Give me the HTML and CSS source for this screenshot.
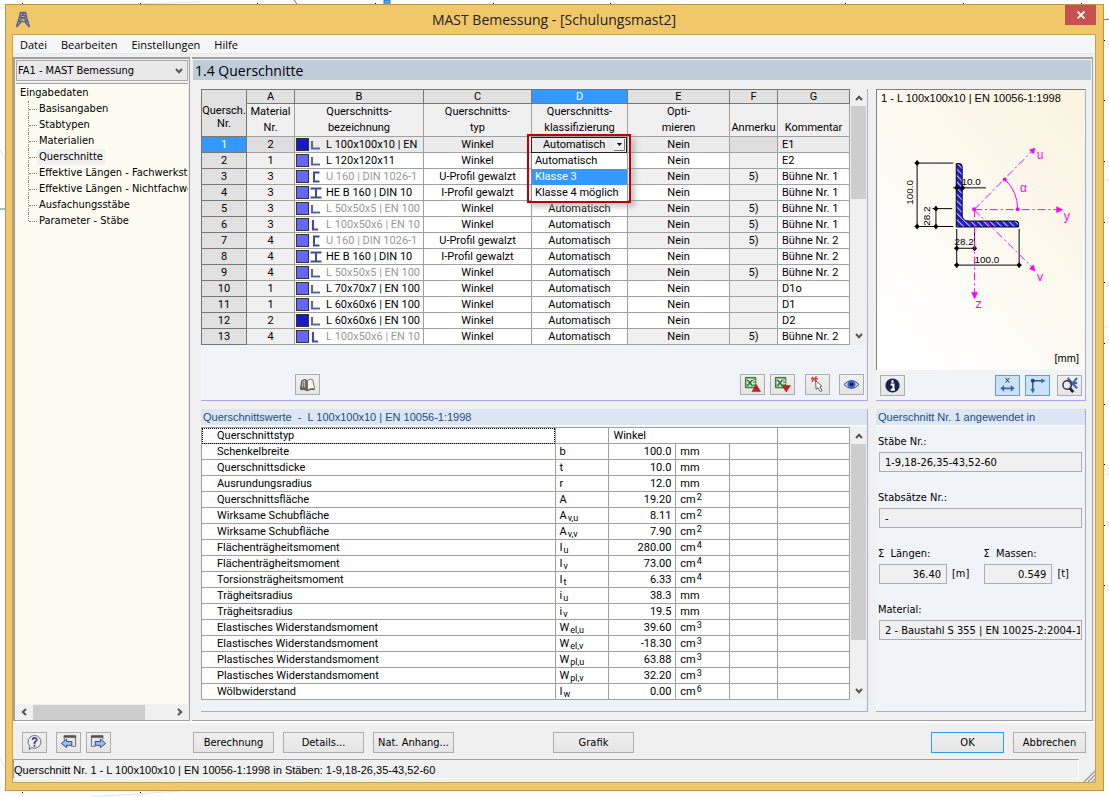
FILE: index.html
```
<!DOCTYPE html>
<html lang="de">
<head>
<meta charset="utf-8">
<title>MAST Bemessung - [Schulungsmast2]</title>
<link rel="stylesheet" href="styles.css">
</head>
<body>
<svg width="0" height="0" class="defs" aria-hidden="true">
  <symbol id="sl" viewBox="0 0 12 12"><path d="M2 2V9.500H10" fill="none" stroke="#5a6a9c" stroke-width="2.200"/></symbol>
  <symbol id="sn" viewBox="0 0 12 12"><path d="M3 1V10.500H8" fill="none" stroke="#3f5086" stroke-width="2.200"/></symbol>
  <symbol id="su" viewBox="0 0 12 12"><path d="M9.500 1.500H4V10.500H9.500" fill="none" stroke="#3f5086" stroke-width="2"/></symbol>
  <symbol id="si" viewBox="0 0 12 12"><path d="M0.500 1.500H11.500M0.500 10.500H11.500M6 1V11" fill="none" stroke="#3f5086" stroke-width="2"/></symbol>
  <symbol id="up" viewBox="0 0 8 6"><path d="M1 5L4 1.800L7 5" fill="none" stroke="#555" stroke-width="2"/></symbol>
  <symbol id="down" viewBox="0 0 8 6"><path d="M1 1L4 4.200L7 1" fill="none" stroke="#555" stroke-width="2"/></symbol>
  <symbol id="xls" viewBox="0 0 18 18"><path d="M1.500 1.500H12.500V12.500H1.500Z" fill="#7fae78" stroke="#2f6a35"/><path d="M3 3H9.500V11H3Z" fill="#f0f7ee"/><path d="M3.500 4L9 10.500M9 4L3.500 10.500" stroke="#2d7a38" stroke-width="1.800"/><path d="M10 5H12M10 8H12" stroke="#fff"/></symbol>
</svg>
<svg class="backdrop" aria-hidden="true">
  <g stroke="#e4e4e4" fill="none"><path d="M0 8L200 2M0 150L6 160M0 758L5 768M90 797L180 791M1102 180H1109M1102 328L1109 326M1102 476L1109 474"/></g>
  <path d="M294 0L297 4M0 209H6M1103 20L1109 19" stroke="#3f8080"/>
  <path d="M384 0H390V5H384Z" fill="#4fa0f0" stroke="#2f78cc"/>
  <path d="M22 3.500H23M140 3.500H141M257 3.500H258M375 3.500H376M493 3.500H494M610 3.500H611M845 3.500H846M963 3.500H964M1081 3.500H1082M22 792.500H23M140 792.500H141M1104 40.500H1105M1104 100.500H1105M1104 161.500H1105M1104 222.500H1105M1104 282.500H1105M1104 343.500H1105M1104 404.500H1105M1104 464.500H1105M1104 525.500H1105M1104 585.500H1105" stroke="#000"/>
</svg>
<div class="window">
  <header class="titlebar">
    <svg class="logo" viewBox="0 0 16 17"><path d="M5.500 1.500H10.500M5.500 1L4.500 6L1.500 16M10.500 1L11.500 6L14.500 16M4.500 6.500H11.500M5.500 1.500L11.500 6M10.500 1.500L4.500 6M3.500 10.500L8 7L12.500 10.500ZM1.500 16L6 11M14.500 16L10 11" fill="none" stroke="#56609a" stroke-width="1.400"/></svg>
    <h1>MAST Bemessung - [Schulungsmast2]</h1>
    <button class="close" aria-label="Schließen"><svg viewBox="0 0 8 8"><path d="M.5 .5L7.500 7.500M7.500 .5L.5 7.500" stroke="#fff" stroke-width="1.800"/></svg></button>
  </header>
  <div class="client">
    <nav class="menu"><button>Datei</button><button>Bearbeiten</button><button>Einstellungen</button><button>Hilfe</button></nav>
    <div class="main">
      <aside class="side">
        <select class="case" aria-label="Bemessungsfall"><option>FA1 - MAST Bemessung</option></select>
        <div class="tree">
          <a class="root" href="#">Eingabedaten</a>
          <ul>
            <li><a href="#">Basisangaben</a></li>
            <li><a href="#">Stabtypen</a></li>
            <li><a href="#">Materialien</a></li>
            <li><a href="#" class="current">Querschnitte</a></li>
            <li><a href="#">Effektive Längen - Fachwerkstä</a></li>
            <li><a href="#">Effektive Längen - Nichtfachwe</a></li>
            <li><a href="#">Ausfachungsstäbe</a></li>
            <li><a href="#">Parameter - Stäbe</a></li>
          </ul>
        </div>
        <div class="hscroll">
          <svg viewBox="0 0 6 8"><path d="M5 1L1.800 4L5 7" fill="none" stroke="#555" stroke-width="2"/></svg>
          <div class="htrack"><div class="hthumb"></div></div>
          <svg viewBox="0 0 6 8"><path d="M1 1L4.200 4L1 7" fill="none" stroke="#555" stroke-width="2"/></svg>
        </div>
      </aside>
      <main class="work">
        <h2>1.4 Querschnitte</h2>
        <div class="panels">
          <section class="panel upper">
            <div class="gridwrap">
              <table class="grid sections">
                <colgroup><col class="w45"><col class="w48"><col class="w129"><col class="w108"><col class="w96"><col class="w102"><col class="w48"><col class="w72"></colgroup>
                <thead>
                  <tr class="letters"><th rowspan="2" class="corner">Quersch.<br>Nr.</th><th>A</th><th>B</th><th>C</th><th class="active">D</th><th>E</th><th>F</th><th>G</th></tr>
                  <tr class="names"><th>Material<br>Nr.</th><th>Querschnitts-<br>bezeichnung</th><th>Querschnitts-<br>typ</th><th>Querschnitts-<br>klassifizierung</th><th>Opti-<br>mieren</th><th>Anmerku</th><th>Kommentar</th></tr>
                </thead>
                <tbody>
                  <tr class="selected"><th>1</th><td>2</td><td><span class="profile"><i class="swatch dark"></i><svg><use href="#sl"/></svg>L 100x100x10 | EN</span></td><td>Winkel</td>
                    <td class="host"><div class="popup">
                      <select aria-label="Querschnittsklassifizierung"><option>Automatisch</option></select>
                      <ul role="listbox" aria-label="Klassen"><li role="option">Automatisch</li><li role="option" aria-selected="true">Klasse 3</li><li role="option">Klasse 4 möglich</li></ul>
                    </div></td><td>Nein</td><td></td><td>E1</td></tr>
                  <tr><th>2</th><td>1</td><td><span class="profile"><i class="swatch"></i><svg><use href="#sl"/></svg>L 120x120x11</span></td><td>Winkel</td><td></td><td>Nein</td><td></td><td>E2</td></tr>
                  <tr class="fixed"><th>3</th><td>3</td><td><span class="profile"><i class="swatch"></i><svg><use href="#su"/></svg>U 160 | DIN 1026-1</span></td><td>U-Profil gewalzt</td><td></td><td>Nein</td><td>5)</td><td>Bühne Nr. 1</td></tr>
                  <tr><th>4</th><td>3</td><td><span class="profile"><i class="swatch"></i><svg><use href="#si"/></svg>HE B 160 | DIN 10</span></td><td>I-Profil gewalzt</td><td></td><td>Nein</td><td></td><td>Bühne Nr. 1</td></tr>
                  <tr class="fixed"><th>5</th><td>3</td><td><span class="profile"><i class="swatch"></i><svg><use href="#sl"/></svg>L 50x50x5 | EN 100</span></td><td>Winkel</td><td>Automatisch</td><td>Nein</td><td>5)</td><td>Bühne Nr. 1</td></tr>
                  <tr class="fixed"><th>6</th><td>3</td><td><span class="profile"><i class="swatch"></i><svg><use href="#sn"/></svg>L 100x50x6 | EN 10</span></td><td>Winkel</td><td>Automatisch</td><td>Nein</td><td>5)</td><td>Bühne Nr. 1</td></tr>
                  <tr class="fixed"><th>7</th><td>4</td><td><span class="profile"><i class="swatch"></i><svg><use href="#su"/></svg>U 160 | DIN 1026-1</span></td><td>U-Profil gewalzt</td><td>Automatisch</td><td>Nein</td><td>5)</td><td>Bühne Nr. 2</td></tr>
                  <tr><th>8</th><td>4</td><td><span class="profile"><i class="swatch"></i><svg><use href="#si"/></svg>HE B 160 | DIN 10</span></td><td>I-Profil gewalzt</td><td>Automatisch</td><td>Nein</td><td></td><td>Bühne Nr. 2</td></tr>
                  <tr class="fixed"><th>9</th><td>4</td><td><span class="profile"><i class="swatch"></i><svg><use href="#sl"/></svg>L 50x50x5 | EN 100</span></td><td>Winkel</td><td>Automatisch</td><td>Nein</td><td>5)</td><td>Bühne Nr. 2</td></tr>
                  <tr><th>10</th><td>1</td><td><span class="profile"><i class="swatch"></i><svg><use href="#sl"/></svg>L 70x70x7 | EN 100</span></td><td>Winkel</td><td>Automatisch</td><td>Nein</td><td></td><td>D1o</td></tr>
                  <tr><th>11</th><td>1</td><td><span class="profile"><i class="swatch"></i><svg><use href="#sl"/></svg>L 60x60x6 | EN 100</span></td><td>Winkel</td><td>Automatisch</td><td>Nein</td><td></td><td>D1</td></tr>
                  <tr><th>12</th><td>2</td><td><span class="profile"><i class="swatch dark"></i><svg><use href="#sl"/></svg>L 60x60x6 | EN 100</span></td><td>Winkel</td><td>Automatisch</td><td>Nein</td><td></td><td>D2</td></tr>
                  <tr class="fixed"><th>13</th><td>4</td><td><span class="profile"><i class="swatch"></i><svg><use href="#sn"/></svg>L 100x50x6 | EN 10</span></td><td>Winkel</td><td>Automatisch</td><td>Nein</td><td>5)</td><td>Bühne Nr. 2</td></tr>
                </tbody>
              </table>
              <div class="vscroll"><svg><use href="#up"/></svg><div class="vtrack"><div class="vthumb third"></div></div><svg><use href="#down"/></svg></div>
            </div>
            <div class="tools">
              <button class="icon book" aria-label="Bibliothek"><svg viewBox="0 0 18 18"><path d="M1.500 13.500L3 5Q6 2.500 9 5V15Q5 12.500 1.500 13.500Z" fill="#6d6657" stroke="#55503f"/><path d="M9 5Q12 2 14.500 4L16.500 13.500Q12 12.500 9 15Z" fill="#fbfaf4" stroke="#77715f"/><path d="M4.500 5L3.500 12M6 4.500V12" stroke="#d8d3c0"/><path d="M1.500 14.500Q5 13.500 9 15.500Q13 13 16.500 14.500" stroke="#4c4738" fill="none"/></svg></button>
              <button class="icon" aria-label="Excel-Export"><svg viewBox="0 0 18 18"><use href="#xls"/><path d="M13 9L17.500 16.500H8.500Z" fill="#d11c1c" stroke="#8f1010" stroke-width=".5"/></svg></button>
              <button class="icon" aria-label="Excel-Import"><svg viewBox="0 0 18 18"><use href="#xls"/><path d="M8.500 10H17.500L13 17Z" fill="#d11c1c" stroke="#8f1010" stroke-width=".5"/></svg></button>
              <button class="icon gap10" aria-label="Auswählen"><svg viewBox="0 0 18 18"><path d="M3 1L8 5.500M8 .5L3 6M2 3H9.500" stroke="#dc4545" stroke-width="1.600"/><path d="M7 5L13.500 10.500L11.500 11.500L14 15.500L12 16.500L9.500 12.500L7.500 14Z" fill="#fff" stroke="#555"/></svg></button>
              <button class="icon gap9" aria-label="Ansicht"><svg viewBox="0 0 18 18"><path d="M1 9Q9 .5 17 9Q9 17.500 1 9Z" fill="#c9d4f0" stroke="#454c63"/><circle cx="9" cy="8.800" r="4.200" fill="#3a66cf"/><circle cx="9" cy="8.800" r="1.800" fill="#101838"/></svg></button>
            </div>
          </section>
          <section class="panel preview">
            <div class="canvas">
              <p>1 - L 100x100x10 | EN 10056-1:1998</p>
              <svg class="drawing" viewBox="0 16 209 236" aria-label="Profilzeichnung">
                <defs>
                  <pattern id="hatch" width="4.500" height="4.500" patternUnits="userSpaceOnUse" patternTransform="rotate(-45)"><rect width="4.500" height="4.500" fill="#1c1ccc"/><rect width="1.100" height="4.500" fill="#c4c4f4"/></pattern>
                </defs>
                <path d="M79 137V73H82Q85 73 85 76V126Q86 131 91 131H139Q142 131 142 134V137Z" fill="url(#hatch)" stroke="#000" stroke-width="1"/>
                <g stroke="#000" fill="none" stroke-width="1">
                  <path d="M37 72.500H76M39.500 70V138M37 136.500H76M55 118.500H75M58.500 116V138M76 97.500H109M79.500 139V178M97.500 139V160M142.500 139V178M77 158.500H99M77 175.500H145"/>
                </g>
                <g fill="#000"><path id="dot" d="M39.500 69.500L42 72.500L39.500 75.500L37 72.500Z"/><use href="#dot" y="64"/><use href="#dot" x="19" y="46"/><use href="#dot" x="19" y="64"/><use href="#dot" x="40" y="25"/><use href="#dot" x="46" y="25"/><use href="#dot" x="40" y="86"/><use href="#dot" x="58" y="86"/><use href="#dot" x="40" y="103"/><use href="#dot" x="103" y="103"/></g>
                <g class="dims" text-anchor="middle"><text x="94" y="95">10.0</text><text x="87" y="155">28.2</text><text x="110" y="173">100.0</text><text transform="translate(35 102) rotate(-90)">100.0</text><text transform="translate(53 126) rotate(-90)">28.2</text></g>
                <g stroke="#f0f" fill="none" stroke-dasharray="8 3 2 3"><path d="M97 119.500H181M97 119.500L156 60M97 119.500L156 178M97.500 119V204"/></g>
                <path d="M128 89Q141 101 141 119" stroke="#f0f" fill="none"/>
                <g fill="#f0f"><circle cx="97" cy="119" r="2"/><circle cx="128" cy="89" r="2"/><circle cx="141" cy="119" r="2"/><path d="M187 119.500L180 116V123ZM159 57L157 63.500L152.500 59ZM159 182L152.500 179.500L157 175ZM97.500 210L94 203H101Z"/></g>
                <g class="axes"><text x="160" y="68">u</text><text x="187" y="130">y</text><text x="160" y="192">v</text><text x="98" y="219">z</text><text x="143" y="102">α</text></g>
              </svg>
              <p class="unit">[mm]</p>
            </div>
            <div class="tools previewtools">
              <button class="icon info" aria-label="Info"><svg viewBox="0 0 18 18"><circle cx="9" cy="9" r="7.500" fill="#18224e"/><path d="M9 3.500V6M7 8H10V13M7 13.500H11.500" stroke="#fff" stroke-width="2.200" fill="none"/></svg></button>
              <button class="icon on" aria-label="Bemaßung"><svg viewBox="0 0 18 18"><path d="M7 1L11 6M11 1L7 6" stroke="#222" stroke-width="1"/><path d="M1.500 12L5.500 8.500V11H12.500V8.500L16.500 12L12.500 15.500V13H5.500V15.500Z" fill="#45639f"/></svg></button>
              <button class="icon on" aria-label="Achsen"><svg viewBox="0 0 18 18"><path d="M4 4H15M4 4V15" stroke="#33528f" stroke-width="1.500"/><circle cx="4" cy="4" r="2.200" fill="#24407c"/><path d="M13 1.500L17.500 4L13 6.500ZM1.500 12.500L4 17.500L6.500 12.500Z" fill="#45639f"/></svg></button>
              <button class="icon gap7" aria-label="Zoom alles"><svg viewBox="0 0 18 18"><path d="M7 1L17 12M17 1L8 12M17 6.500H8" stroke="#3e62b2" stroke-width="2.200"/><circle cx="6.500" cy="8.500" r="4.500" fill="#e9f0f8" fill-opacity=".7" stroke="#333" stroke-width="1.500"/><path d="M9.500 12L13 16" stroke="#222" stroke-width="3"/></svg></button>
            </div>
          </section>
          <section class="panel lower">
            <h3>Querschnittswerte&nbsp; -&nbsp; L 100x100x10 | EN 10056-1:1998</h3>
            <div class="gridwrap">
              <table class="grid values">
                <colgroup><col class="w354"><col class="w54"><col class="w66"><col class="w54"><col class="w48"><col class="w72"></colgroup>
                <tbody>
                  <tr><td class="focus">Querschnittstyp</td><td></td><td colspan="3" class="text">Winkel</td><td></td></tr>
                  <tr><td>Schenkelbreite</td><td>b</td><td>100.0</td><td>mm</td><td></td><td></td></tr>
                  <tr><td>Querschnittsdicke</td><td>t</td><td>10.0</td><td>mm</td><td></td><td></td></tr>
                  <tr><td>Ausrundungsradius</td><td>r</td><td>12.0</td><td>mm</td><td></td><td></td></tr>
                  <tr><td>Querschnittsfläche</td><td>A</td><td>19.20</td><td>cm<sup>2</sup></td><td></td><td></td></tr>
                  <tr><td>Wirksame Schubfläche</td><td>A<sub>v,u</sub></td><td>8.11</td><td>cm<sup>2</sup></td><td></td><td></td></tr>
                  <tr><td>Wirksame Schubfläche</td><td>A<sub>v,v</sub></td><td>7.90</td><td>cm<sup>2</sup></td><td></td><td></td></tr>
                  <tr><td>Flächenträgheitsmoment</td><td>I<sub>u</sub></td><td>280.00</td><td>cm<sup>4</sup></td><td></td><td></td></tr>
                  <tr><td>Flächenträgheitsmoment</td><td>I<sub>v</sub></td><td>73.00</td><td>cm<sup>4</sup></td><td></td><td></td></tr>
                  <tr><td>Torsionsträgheitsmoment</td><td>I<sub>t</sub></td><td>6.33</td><td>cm<sup>4</sup></td><td></td><td></td></tr>
                  <tr><td>Trägheitsradius</td><td>i<sub>u</sub></td><td>38.3</td><td>mm</td><td></td><td></td></tr>
                  <tr><td>Trägheitsradius</td><td>i<sub>v</sub></td><td>19.5</td><td>mm</td><td></td><td></td></tr>
                  <tr><td>Elastisches Widerstandsmoment</td><td>W<sub>el,u</sub></td><td>39.60</td><td>cm<sup>3</sup></td><td></td><td></td></tr>
                  <tr><td>Elastisches Widerstandsmoment</td><td>W<sub>el,v</sub></td><td>-18.30</td><td>cm<sup>3</sup></td><td></td><td></td></tr>
                  <tr><td>Plastisches Widerstandsmoment</td><td>W<sub>pl,u</sub></td><td>63.88</td><td>cm<sup>3</sup></td><td></td><td></td></tr>
                  <tr><td>Plastisches Widerstandsmoment</td><td>W<sub>pl,v</sub></td><td>32.20</td><td>cm<sup>3</sup></td><td></td><td></td></tr>
                  <tr><td>Wölbwiderstand</td><td>I<sub>w</sub></td><td>0.00</td><td>cm<sup>6</sup></td><td></td><td></td></tr>
                </tbody>
              </table>
              <div class="vscroll"><svg><use href="#up"/></svg><div class="vtrack"><div class="vthumb most"></div></div><svg><use href="#down"/></svg></div>
            </div>
          </section>
          <section class="panel usage">
            <h3>Querschnitt Nr. 1 angewendet in</h3>
            <div class="form">
              <label for="members">Stäbe Nr.:</label><input id="members" readonly value="1-9,18-26,35-43,52-60">
              <label for="sets">Stabsätze Nr.:</label><input id="sets" readonly value="-">
              <div class="pair">
                <div><label for="len">Σ&nbsp; Längen:</label><div class="measure"><input id="len" readonly value="36.40"><span>[m]</span></div></div>
                <div><label for="mass">Σ&nbsp; Massen:</label><div class="measure"><input id="mass" readonly value="0.549"><span>[t]</span></div></div>
              </div>
              <label for="mat">Material:</label><input id="mat" readonly value="2 - Baustahl S 355 | EN 10025-2:2004-11">
            </div>
          </section>
        </div>
      </main>
    </div>
    <footer class="actions">
      <div class="left">
        <button class="icon" aria-label="Hilfe"><svg viewBox="0 0 18 18"><path d="M9 1.500A7 6.800 0 1 1 6 14.500L3.500 16.500L4 13A7 6.800 0 0 1 9 1.500Z" fill="#e9edf5" stroke="#666"/><path d="M6.500 6Q9 2.500 11.500 5.500Q11.500 7.500 9 9V10.500M9 11.500V13.500" fill="none" stroke="#34467e" stroke-width="1.800"/></svg></button>
        <button class="icon back" aria-label="Zurück"><svg viewBox="0 0 18 18"><path d="M4.500 7V1.500H16.500V13H12" fill="#e6e6e6" stroke="#666"/><path d="M4 3H17" stroke="#555" stroke-width="2"/><path d="M1.500 10L7 5.500V8H12.500V12H7V14.500Z" fill="#9fbcf0" stroke="#24438c"/></svg></button>
        <button class="icon gap5" aria-label="Weiter"><svg viewBox="0 0 18 18"><path d="M6 13H1.500V1.500H13.500V6" fill="#e6e6e6" stroke="#666"/><path d="M1 3H14" stroke="#555" stroke-width="2"/><path d="M16.500 10L11 5.500V8H5.500V12H11V14.500Z" fill="#9fbcf0" stroke="#24438c"/></svg></button>
      </div>
      <div class="mid"><button>Berechnung</button><button>Details...</button><button>Nat. Anhang...</button><button class="graphic">Grafik</button></div>
      <div class="right"><button class="default">OK</button><button>Abbrechen</button></div>
    </footer>
    <div class="status"><p>Querschnitt Nr. 1 - L 100x100x10 | EN 10056-1:1998 in Stäben: 1-9,18-26,35-43,52-60</p><svg viewBox="0 0 12 12"><path d="M1 12L12 1M5 12L12 5M9 12L12 9" stroke="#999" stroke-width="1.300"/></svg></div>
  </div>
</div>
</body>
</html>
```
FILE: styles.css
```
* { box-sizing: border-box; }
:root {
  --ui: "DejaVu Sans Condensed", "Liberation Sans", sans-serif;
  --grid: Roboto, "Liberation Sans", sans-serif;
  --text: "Liberation Sans", Arial, sans-serif;
  --segoe: "Open Sans", "Noto Sans", sans-serif;
  --line: #a0a0a0;
}
body {
  margin: 0;
  min-height: 100vh;
  padding: 4px 5px 6px;
  display: flex;
  background: #fdfdfd;
  font: 11px/16px var(--text);
  color: #000;
}
.defs { display: none; }
.backdrop { position: absolute; inset: 0; z-index: -1; width: 100%; height: 100%; }
h1, h2, h3, p, ul { margin: 0; padding: 0; font-weight: normal; }
ul { list-style: none; }
button, input, select { font: inherit; color: inherit; margin: 0; }
svg { display: block; }
a { color: inherit; text-decoration: none; }

.window {
  flex: 1;
  display: flex;
  flex-direction: column;
  border: 1px solid #b9964a;
  background: #f0c869;
  padding: 0 7px 7px 6px;
}
.titlebar { display: flex; align-items: flex-start; height: 29px; }
.logo { width: 16px; height: 17px; margin: 6px 0 0 3px; }
.titlebar h1 {
  flex: 1;
  padding: 4px 0 0 12px;
  text-align: center;
  font: 14px/22px var(--segoe);
  color: #222;
}
.close { width: 31px; height: 20px; border: 0; padding: 0; background: #c75050; display: grid; place-items: center; }
.close svg { width: 8px; height: 8px; }
.client { flex: 1; display: flex; flex-direction: column; border: 1px solid #c3a350; background: #f0f0f0; }

.menu { display: flex; gap: 14px; height: 19px; padding: 0 7px; background: #f5f6f7; border-bottom: 1px solid #e8e8e8; }
.menu button { border: 0; padding: 0; background: none; font: 11px/19px var(--segoe); }

.main { flex: 1; display: flex; gap: 2px; margin-top: 3px; border-bottom: 2px solid #fff; }
.side {
  width: 177px;
  display: flex;
  flex-direction: column;
  border: 1px solid var(--line);
  border-width: 2px 1px 1px 2px;
  padding: 1px 1px 0 1px;
  font-family: var(--ui);
}
.case {
  width: 100%;
  height: 21px;
  border: 1px solid #aaa;
  padding: 0 20px 0 1px;
  appearance: none;
  background: #e9e9e9 url("data:image/svg+xml,%3Csvg xmlns='http://www.w3.org/2000/svg' viewBox='0 0 8 6'%3E%3Cpath d='M1 1L4 4.2L7 1' fill='none' stroke='%23555' stroke-width='2'/%3E%3C/svg%3E") no-repeat right 4px center / 8px 6px;
}
.tree { flex: 1; margin-top: 2px; border-top: 1px solid var(--line); padding-top: 1px; background: #fdfcf2; overflow: hidden; white-space: nowrap; }
.root { display: block; padding-left: 4px; }
.tree ul { margin-left: 12px; }
.tree li { display: flex; height: 16px; border-left: 1px dotted #888; }
.tree li:last-child { height: 8px; }
.tree li::before { content: ""; width: 8px; height: 8px; border-bottom: 1px dotted #888; flex: none; }
.tree li a { height: 16px; padding: 0 2px; }
.tree .current { background: #f0f0f0; }
.hscroll { display: flex; align-items: center; height: 16px; padding: 0 5px; gap: 6px; background: #f0f0f0; }
.hscroll svg { width: 6px; height: 8px; }
.htrack { flex: 1; height: 15px; }
.hthumb { width: 81%; height: 100%; background: #cdcdcd; }

.work { flex: 1; min-width: 0; display: flex; flex-direction: column; border: 1px solid var(--line); border-width: 2px 1px 1px 0; margin-right: 2px; padding: 1px 1px 8px 1px; }
.work h2 { height: 20px; padding-left: 2px; background: #bfcddb; font: 14px/21px var(--segoe); }
.panels { flex: 1; display: grid; grid-template-columns: minmax(0, 1fr) 210px; grid-template-rows: auto 1fr; gap: 8px; padding: 9px 5px 0 8px; }
.panel { display: flex; flex-direction: column; background: #f0f4f9; border: 1px solid #a9a9ea; border-width: 0 1px 1px 0; min-width: 0; }
.gridwrap { display: flex; background: #f0f0f0; font-family: var(--grid); }

.grid { flex: 1; min-width: 0; border-collapse: collapse; table-layout: fixed; background: #fff; }
.grid th, .grid td { height: 16px; padding: 0; border: 1px solid var(--line); line-height: 15px; font-weight: normal; white-space: nowrap; overflow: hidden; text-align: center; }
.w45 { width: 45px; } .w48 { width: 48px; } .w129 { width: 129px; } .w108 { width: 108px; }
.w96 { width: 96px; } .w102 { width: 102px; } .w72 { width: 72px; } .w354 { width: 354px; }
.w54 { width: 54px; } .w66 { width: 67px; }
.sections .letters th { height: 14px; line-height: 13px; background: #e1e1e1; border-color: #777; }
.sections .letters .active { background: #3399ff; color: #fff; }
.sections .names th { height: 33px; line-height: 16px; background: #f0f0f0; vertical-align: bottom; }
.sections thead .corner { line-height: 13px; padding-top: 8px; }
.sections tbody th { background: #e1e1e1; border-color: #777; line-height: 14px; }
.sections .selected td { background: #ebebeb; }
.sections .selected th { background: #3399ff; color: #fff; }
.sections td:nth-child(2), .sections td:nth-child(7), .sections .fixed td:nth-child(6) { background: #f0f0f0; }
.sections .selected td:nth-child(2), .sections .selected td:nth-child(7) { background: #dedede; }
.sections td:nth-child(8) { text-align: left; padding-left: 4px; }
.fixed .profile { color: #999; }
.profile { display: flex; align-items: center; height: 15px; padding-left: 1px; }
.profile svg { width: 12px; height: 12px; margin: 0 4px 0 1px; flex: none; }
.swatch { width: 13px; height: 13px; border: 1px solid #333; background: #6666ff; flex: none; }
.swatch.dark { background: #1818cc; }

.grid .host { position: relative; overflow: visible; }
.popup { position: absolute; z-index: 2; inset: -3px -4px auto -5px; padding: 1px 2px 0; border: 2px solid #c00000; box-shadow: 4px 4px 5px #9998; }
.popup select {
  display: block;
  width: 100%;
  height: 16px;
  border: 1px solid #222;
  padding: 0 0 0 11px;
  appearance: none;
  line-height: 14px;
  background: #ebebeb url("data:image/svg+xml,%3Csvg xmlns='http://www.w3.org/2000/svg' viewBox='0 0 11 12'%3E%3Cpath d='M0 0H11V12H0Z' fill='%23f0f0f0'/%3E%3Cpath d='M0 11.5H10.500V0' fill='none' stroke='%23777'/%3E%3Cpath d='M3 4H8L5.500 7Z'/%3E%3C/svg%3E") no-repeat right 1px center / 11px 12px;
}
.popup ul { background: #fff; border-left: 1px solid #888; text-align: left; }
.popup li { height: 16px; padding-left: 3px; line-height: 16px; }
.popup [aria-selected] { background: #3399ff; color: #fff; }

.vscroll { width: 17px; display: flex; flex-direction: column; align-items: center; gap: 5px; padding: 6px 0; }
.vscroll svg { width: 8px; height: 6px; flex: none; }
.vtrack { flex: 1; width: 15px; }
.vthumb { background: #cdcdcd; }
.third { height: 42%; } .most { height: 82%; }

.tools { display: flex; height: 55px; padding: 29px 3px 0 0; gap: 5px; }
.icon { width: 25px; height: 21px; padding: 0; border: 1px solid #adadad; background: linear-gradient(#f0f0f0, #e5e5e5); display: grid; place-items: center; flex: none; }
.icon svg { width: 17px; height: 17px; }
.book { margin: 0 auto 0 94px; }
.gap10 { margin-left: 5px; }
.gap9 { margin-left: 4px; }
.on { border-color: #569de5; background: #c9e2f9; }

.canvas { flex: 1; padding-left: 1px; border: 1px solid #808080; border-width: 1px 0 0 1px; background: linear-gradient(50deg, #fff 12%, #fbf4e1 95%); }
.canvas p { padding-left: 3px; }
.drawing { width: 100%; height: 236px; }
.dims { font: 10px var(--text); }
.axes { font: 12px "Liberation Mono", monospace; fill: #f0f; }
.canvas .unit { padding: 8px 6px 0 0; text-align: right; }
.previewtools { height: 30px; padding: 5px 3px 0 4px; }
.info { margin-right: auto; }
.gap7 { margin-left: 2px; }

.panel h3 { height: 17px; padding-left: 2px; border-bottom: 1px solid #fff; background: #dce6f4; color: #1f4e79; font-size: 11px; line-height: 16px; }
.lower .gridwrap { margin-top: 1px; }
.grid.values td { text-align: left; padding-left: 4px; }
.grid.values td:first-child { padding-left: 15px; }
.grid.values td:nth-child(3):not(.text) { text-align: right; padding-right: 4px; }
.values .focus { outline: 1px dotted #000; outline-offset: -1px; }
sub, sup { font-size: 9px; line-height: 0; margin-left: 1px; }
sub { vertical-align: -2px; }
sup { vertical-align: 3px; }

.form { display: flex; flex-direction: column; padding: 8px 3px; font-family: var(--ui); }
.form label { display: block; height: 18px; line-height: 16px; margin-left: -1px; }
.form input { width: 100%; height: 20px; margin-bottom: 18px; padding: 0 1px 0 5px; border: 1px solid #abadb3; background: #f0f0f0; }
.pair { display: flex; gap: 15px; }
.measure { display: flex; gap: 5px; }
.form .measure input { width: 68px; text-align: right; padding-right: 5px; }
.measure span { line-height: 19px; }

.actions { display: grid; grid-template-columns: 171px 1fr auto; padding: 9px 9px 6px; font-family: var(--ui); }
.left, .mid, .right { display: flex; }
.mid, .right { gap: 9px; }
.actions button:not(.icon) { width: 81px; height: 21px; padding: 0; border: 1px solid #adadad; background: linear-gradient(#f0f0f0, #e5e5e5); }
.actions .right button:not(.icon) { width: 73px; }
.actions .graphic { margin-left: 90px; }
.actions button.default:not(.icon) { border-color: #3399ff; }
.back { margin-left: 9px; }
.gap5 { margin-left: 5px; }
.status { display: flex; align-items: flex-end; }
.status p { flex: 1; height: 20px; margin-bottom: 3px; border: 1px solid #fff; border-top-color: var(--line); border-left-color: var(--line); line-height: 20px; }
.status svg { width: 12px; height: 12px; margin-left: 4px; }
```
